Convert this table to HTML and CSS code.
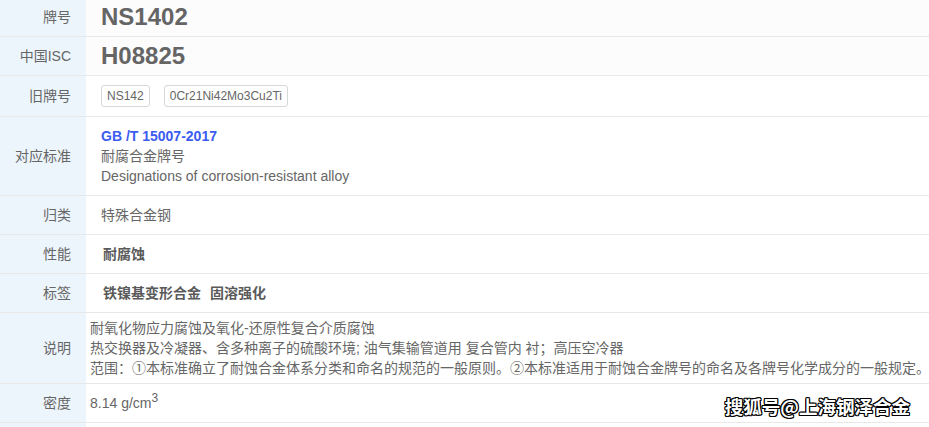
FILE: index.html
```html
<!DOCTYPE html>
<html lang="zh-CN">
<head>
<meta charset="utf-8">
<title>NS1402</title>
<link rel="stylesheet" href="styles.css">
</head>
<body>
<div class="sheet">
  <div class="row row-head">
    <div class="label">牌号</div>
    <div class="value"><span class="big">NS1402</span></div>
  </div>
  <div class="row row-head">
    <div class="label">中国ISC</div>
    <div class="value"><span class="big">H08825</span></div>
  </div>
  <div class="row row-tags">
    <div class="label">旧牌号</div>
    <div class="value tags">
      <span class="tag">NS142</span>
      <span class="tag">0Cr21Ni42Mo3Cu2Ti</span>
    </div>
  </div>
  <div class="row">
    <div class="label">对应标准</div>
    <div class="value">
      <div class="std-code">GB /T 15007-2017</div>
      <div>耐腐合金牌号</div>
      <div>Designations of corrosion-resistant alloy</div>
    </div>
  </div>
  <div class="row">
    <div class="label">归类</div>
    <div class="value">特殊合金钢</div>
  </div>
  <div class="row">
    <div class="label">性能</div>
    <div class="value"><span class="strong">耐腐蚀</span></div>
  </div>
  <div class="row">
    <div class="label">标签</div>
    <div class="value"><span class="strong">铁镍基变形合金</span><span class="strong">固溶强化</span></div>
  </div>
  <div class="row">
    <div class="label">说明</div>
    <div class="value narrow desc">
      <div>耐氧化物应力腐蚀及氧化-还原性复合介质腐蚀</div>
      <div>热交换器及冷凝器、含多种离子的硫酸环境; 油气集输管道用 复合管内 衬；高压空冷器</div>
      <div>范围：①本标准确立了耐蚀合金体系分类和命名的规范的一般原则。②本标准适用于耐蚀合金牌号的命名及各牌号化学成分的一般规定。</div>
    </div>
  </div>
  <div class="row">
    <div class="label">密度</div>
    <div class="value narrow">8.14 g/cm<sup>3</sup></div>
  </div>
  <div class="row row-tail">
    <div class="label"></div>
    <div class="value"></div>
  </div>
  <div class="watermark">搜狐号@上海钢泽合金</div>
</div>
</body>
</html>
```

FILE: styles.css
```css
* {
  box-sizing: border-box;
}

html, body {
  margin: 0;
  padding: 0;
  background: #ffffff;
  overflow: hidden;
}

body {
  font-family: "Liberation Sans", "Noto Sans CJK SC", sans-serif;
  font-size: 14px;
  line-height: 20px;
  color: #666666;
}

.sheet {
  position: relative;
  margin-top: -2px;
  width: 929px;
}

.row {
  display: grid;
  grid-template-columns: 86px 1fr;
  border-bottom: 1px solid #e8e8e8;
}

.label {
  background: #edf5fc;
  text-align: right;
  padding: 9px 15px 9px 0;
  display: flex;
  align-items: center;
  justify-content: flex-end;
  color: #666666;
}

.value {
  padding: 9px 15px;
  min-height: 38px;
}

.row-tail .label,
.row-tail .value {
  min-height: 0;
  height: 6px;
  padding: 0;
}

.row-tail {
  border-bottom: 0;
}

.value.narrow {
  padding-left: 4px;
  padding-right: 0;
}

.desc {
  padding-top: 5px;
  padding-bottom: 5px;
}

.desc div {
  white-space: nowrap;
}

.row-head .value {
  background: #fcfcfc;
  display: flex;
  align-items: center;
}

.big {
  font-size: 24px;
  font-weight: bold;
  line-height: 20px;
  color: #656565;
}

.tags {
  display: flex;
  gap: 14px;
  align-items: center;
}

.tag {
  display: inline-block;
  border: 1px solid #d8d8d8;
  border-radius: 3px;
  font-size: 12px;
  line-height: 20px;
  padding: 0 5px;
  color: #666666;
}

.std-code {
  font-weight: bold;
  color: #3b5cf2;
}

.strong {
  font-weight: bold;
  color: #5a5a5a;
  padding: 0 2px;
  margin-right: 5px;
}

sup {
  font-size: 12px;
  line-height: 0;
  vertical-align: 6px;
}

.watermark {
  position: absolute;
  right: 19px;
  top: 396px;
  font-size: 18.5px;
  line-height: 24px;
  font-weight: bold;
  color: #ffffff;
  font-family: "Noto Sans CJK SC", sans-serif;
  text-shadow: 1px 1px 0 #000, -1px -1px 0 #000, 1px -1px 0 #000, -1px 1px 0 #000, 0 1px 0 #000, 0 -1px 0 #000, 1px 0 0 #000, -1px 0 0 #000;
}
```
